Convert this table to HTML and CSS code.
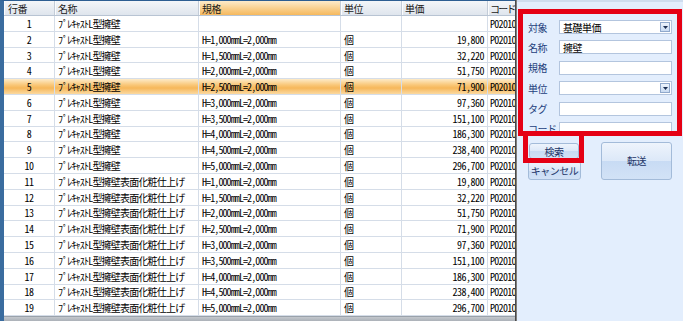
FILE: index.html
```html
<!DOCTYPE html>
<html lang="ja">
<head>
<meta charset="utf-8">
<link rel="stylesheet" href="styles.css">
</head>
<body>
<div class="app">
  <div class="grid-pane">
    <div class="row head">
      <div class="cell c-no">行番</div>
      <div class="cell">名称</div>
      <div class="cell sorted">規格</div>
      <div class="cell">単位</div>
      <div class="cell">単価</div>
      <div class="cell code">コード</div>
    </div>
    <div class="row"><div class="cell num">1</div><div class="cell name">ﾌﾟﾚｷｬｽﾄL型擁壁</div><div class="cell spec"></div><div class="cell"></div><div class="cell price"></div><div class="cell code">P02010</div></div>
    <div class="row"><div class="cell num">2</div><div class="cell name">ﾌﾟﾚｷｬｽﾄL型擁壁</div><div class="cell spec">H=1,000mmL=2,000mm</div><div class="cell">個</div><div class="cell price">19,800</div><div class="cell code">P02010</div></div>
    <div class="row"><div class="cell num">3</div><div class="cell name">ﾌﾟﾚｷｬｽﾄL型擁壁</div><div class="cell spec">H=1,500mmL=2,000mm</div><div class="cell">個</div><div class="cell price">32,220</div><div class="cell code">P02010</div></div>
    <div class="row"><div class="cell num">4</div><div class="cell name">ﾌﾟﾚｷｬｽﾄL型擁壁</div><div class="cell spec">H=2,000mmL=2,000mm</div><div class="cell">個</div><div class="cell price">51,750</div><div class="cell code">P02010</div></div>
    <div class="row selected"><div class="cell num">5</div><div class="cell name">ﾌﾟﾚｷｬｽﾄL型擁壁</div><div class="cell spec">H=2,500mmL=2,000mm</div><div class="cell">個</div><div class="cell price">71,900</div><div class="cell code">P02010</div></div>
    <div class="row"><div class="cell num">6</div><div class="cell name">ﾌﾟﾚｷｬｽﾄL型擁壁</div><div class="cell spec">H=3,000mmL=2,000mm</div><div class="cell">個</div><div class="cell price">97,360</div><div class="cell code">P02010</div></div>
    <div class="row"><div class="cell num">7</div><div class="cell name">ﾌﾟﾚｷｬｽﾄL型擁壁</div><div class="cell spec">H=3,500mmL=2,000mm</div><div class="cell">個</div><div class="cell price">151,100</div><div class="cell code">P02010</div></div>
    <div class="row"><div class="cell num">8</div><div class="cell name">ﾌﾟﾚｷｬｽﾄL型擁壁</div><div class="cell spec">H=4,000mmL=2,000mm</div><div class="cell">個</div><div class="cell price">186,300</div><div class="cell code">P02010</div></div>
    <div class="row"><div class="cell num">9</div><div class="cell name">ﾌﾟﾚｷｬｽﾄL型擁壁</div><div class="cell spec">H=4,500mmL=2,000mm</div><div class="cell">個</div><div class="cell price">238,400</div><div class="cell code">P02010</div></div>
    <div class="row"><div class="cell num">10</div><div class="cell name">ﾌﾟﾚｷｬｽﾄL型擁壁</div><div class="cell spec">H=5,000mmL=2,000mm</div><div class="cell">個</div><div class="cell price">296,700</div><div class="cell code">P02010</div></div>
    <div class="row"><div class="cell num">11</div><div class="cell name">ﾌﾟﾚｷｬｽﾄL型擁壁表面化粧仕上げ</div><div class="cell spec">H=1,000mmL=2,000mm</div><div class="cell">個</div><div class="cell price">19,800</div><div class="cell code">P02010</div></div>
    <div class="row"><div class="cell num">12</div><div class="cell name">ﾌﾟﾚｷｬｽﾄL型擁壁表面化粧仕上げ</div><div class="cell spec">H=1,500mmL=2,000mm</div><div class="cell">個</div><div class="cell price">32,220</div><div class="cell code">P02010</div></div>
    <div class="row"><div class="cell num">13</div><div class="cell name">ﾌﾟﾚｷｬｽﾄL型擁壁表面化粧仕上げ</div><div class="cell spec">H=2,000mmL=2,000mm</div><div class="cell">個</div><div class="cell price">51,750</div><div class="cell code">P02010</div></div>
    <div class="row"><div class="cell num">14</div><div class="cell name">ﾌﾟﾚｷｬｽﾄL型擁壁表面化粧仕上げ</div><div class="cell spec">H=2,500mmL=2,000mm</div><div class="cell">個</div><div class="cell price">71,900</div><div class="cell code">P02010</div></div>
    <div class="row"><div class="cell num">15</div><div class="cell name">ﾌﾟﾚｷｬｽﾄL型擁壁表面化粧仕上げ</div><div class="cell spec">H=3,000mmL=2,000mm</div><div class="cell">個</div><div class="cell price">97,360</div><div class="cell code">P02010</div></div>
    <div class="row"><div class="cell num">16</div><div class="cell name">ﾌﾟﾚｷｬｽﾄL型擁壁表面化粧仕上げ</div><div class="cell spec">H=3,500mmL=2,000mm</div><div class="cell">個</div><div class="cell price">151,100</div><div class="cell code">P02010</div></div>
    <div class="row"><div class="cell num">17</div><div class="cell name">ﾌﾟﾚｷｬｽﾄL型擁壁表面化粧仕上げ</div><div class="cell spec">H=4,000mmL=2,000mm</div><div class="cell">個</div><div class="cell price">186,300</div><div class="cell code">P02010</div></div>
    <div class="row"><div class="cell num">18</div><div class="cell name">ﾌﾟﾚｷｬｽﾄL型擁壁表面化粧仕上げ</div><div class="cell spec">H=4,500mmL=2,000mm</div><div class="cell">個</div><div class="cell price">238,400</div><div class="cell code">P02010</div></div>
    <div class="row"><div class="cell num">19</div><div class="cell name">ﾌﾟﾚｷｬｽﾄL型擁壁表面化粧仕上げ</div><div class="cell spec">H=5,000mmL=2,000mm</div><div class="cell">個</div><div class="cell price">296,700</div><div class="cell code">P02010</div></div>
    <div class="grid-footer"></div>
  </div>
  <div class="splitter"></div>
  <div class="side">
    <div class="form">
      <div class="label">対象</div><div class="input combo"><span class="val">基礎単価</span><span class="drop"><svg width="5" height="3" viewBox="0 0 5 3"><path d="M0 0H5L2.5 3Z" fill="#1c2f52"/></svg></span></div>
      <div class="label">名称</div><div class="input"><span class="val">擁壁</span></div>
      <div class="label">規格</div><div class="input"></div>
      <div class="label">単位</div><div class="input combo"><span class="val"></span><span class="drop"><svg width="5" height="3" viewBox="0 0 5 3"><path d="M0 0H5L2.5 3Z" fill="#1c2f52"/></svg></span></div>
      <div class="label">タグ</div><div class="input"></div>
      <div class="label">コード</div><div class="input"></div>
    </div>
    <div class="buttons">
      <div class="btn-col">
        <button class="btn btn-search">検索</button>
        <button class="btn btn-cancel">キャンセル</button>
      </div>
      <button class="btn btn-transfer">転送</button>
    </div>
    <div class="mark mark-form"></div>
    <div class="mark mark-search"></div>
  </div>
</div>
</body>
</html>
```
FILE: styles.css
```css
html, body {
  margin: 0;
  padding: 0;
  background: #e3eefd;
}
body {
  font-family: "Noto Sans Mono CJK JP", "Noto Sans CJK JP", monospace;
  font-size: 10px;
  color: #000;
}
.app {
  display: flex;
  width: 683px;
  height: 321px;
  overflow: hidden;
}
.grid-pane {
  width: 511px;
  flex: none;
  display: flex;
  flex-direction: column;
  border-top: 1px solid #2d5e92;
  border-left: 4px solid #3a6c9f;
  background: #fff;
  overflow: hidden;
}
.row {
  display: grid;
  grid-template-columns: 51px 144px 142px 61px 86px 80px;
  width: 564px;
  height: 15.8px;
  flex: none;
  box-sizing: border-box;
  border-bottom: 1px solid #d5dde8;
}
.cell {
  display: flex;
  align-items: center;
  padding: 0 3px;
  border-right: 1px solid #d5dde8;
  white-space: nowrap;
  overflow: hidden;
  letter-spacing: -0.5px;
}
.cell.name {
  letter-spacing: -0.8px;
}
.cell.spec {
  letter-spacing: -0.9px;
}
.cell.code {
  padding-left: 2px;
  letter-spacing: -0.7px;
}
.row.head {
  height: 15px;
  border-bottom: 1px solid #b8c4d3;
  background: linear-gradient(#f4f6f9, #dfe5ed);
  color: #1a1a1a;
}
.row.head .cell {
  border-right: 1px solid #c3ccd8;
  box-shadow: inset 1px 0 0 #fbfcfd;
  letter-spacing: -0.5px;
}
.row.head .cell.code {
  letter-spacing: -1.7px;
}
.row.head .c-no {
  padding-left: 4px;
}
.row.head .sorted {
  background: linear-gradient(#fdebcb, #f9cf8c 55%, #f5b95e);
}
.num {
  justify-content: center;
}
.price {
  justify-content: flex-end;
}
.row.selected {
  background: linear-gradient(#fdebc9 0%, #f9c778 40%, #f6b75a 60%, #fbd9a0 100%);
}
.grid-footer {
  flex: 1;
  background: linear-gradient(#c4c8cd, #abb1b8);
  border-top: 1px solid #9aa2ab;
}
.splitter {
  width: 2px;
  flex: none;
  background: #7e7e7e;
  border-left: 1px solid #4a4a4a;
  box-sizing: border-box;
}
.side {
  flex: 1;
  position: relative;
  background: #e3eefd;
  padding: 20px 0 0 11px;
  box-shadow: inset 0 2px 0 #cfddef;
}
.form {
  display: grid;
  grid-template-columns: 31px 113px;
  grid-auto-rows: 14px;
  row-gap: 6.4px;
}
.label {
  display: flex;
  align-items: center;
  color: #243f7c;
  white-space: nowrap;
  letter-spacing: -0.5px;
}
.input {
  box-sizing: border-box;
  height: 14px;
  background: #fff;
  border: 1px solid #b3c5de;
  display: flex;
  align-items: center;
  padding-left: 3px;
  letter-spacing: -0.5px;
}
.input .val {
  flex: 1;
}
.drop {
  width: 10px;
  height: 10px;
  margin-right: 1px;
  box-sizing: border-box;
  border: 1px solid #90a9cc;
  background: linear-gradient(#eef4fc, #c9dbf2);
  display: flex;
  align-items: center;
  justify-content: center;
}
.buttons {
  display: flex;
  gap: 20px;
  margin-top: 6px;
}
.btn-col {
  display: flex;
  flex-direction: column;
  gap: 2px;
  padding-top: 1px;
}
.btn {
  font-family: inherit;
  font-size: 10px;
  letter-spacing: -0.5px;
  color: #1c3466;
  box-sizing: border-box;
  border: 1px solid #a3bbd9;
  border-radius: 3px;
  background: linear-gradient(#eef4fc 0%, #dce8f8 50%, #c8dbf4 51%, #d2e2f6 100%);
  padding: 0;
  margin: 0;
  cursor: default;
}
.btn-search {
  width: 50px;
  height: 16px;
  margin-left: 1px;
}
.btn-cancel {
  width: 53px;
  height: 19px;
}
.btn-transfer {
  width: 71px;
  height: 38px;
}
.mark {
  position: absolute;
  box-sizing: border-box;
  border: 5px solid #e50014;
  pointer-events: none;
}
.mark-form {
  left: 1px;
  top: 9px;
  width: 164px;
  height: 127px;
}
.mark-search {
  left: 6px;
  top: 131px;
  width: 61px;
  height: 32px;
}
```
